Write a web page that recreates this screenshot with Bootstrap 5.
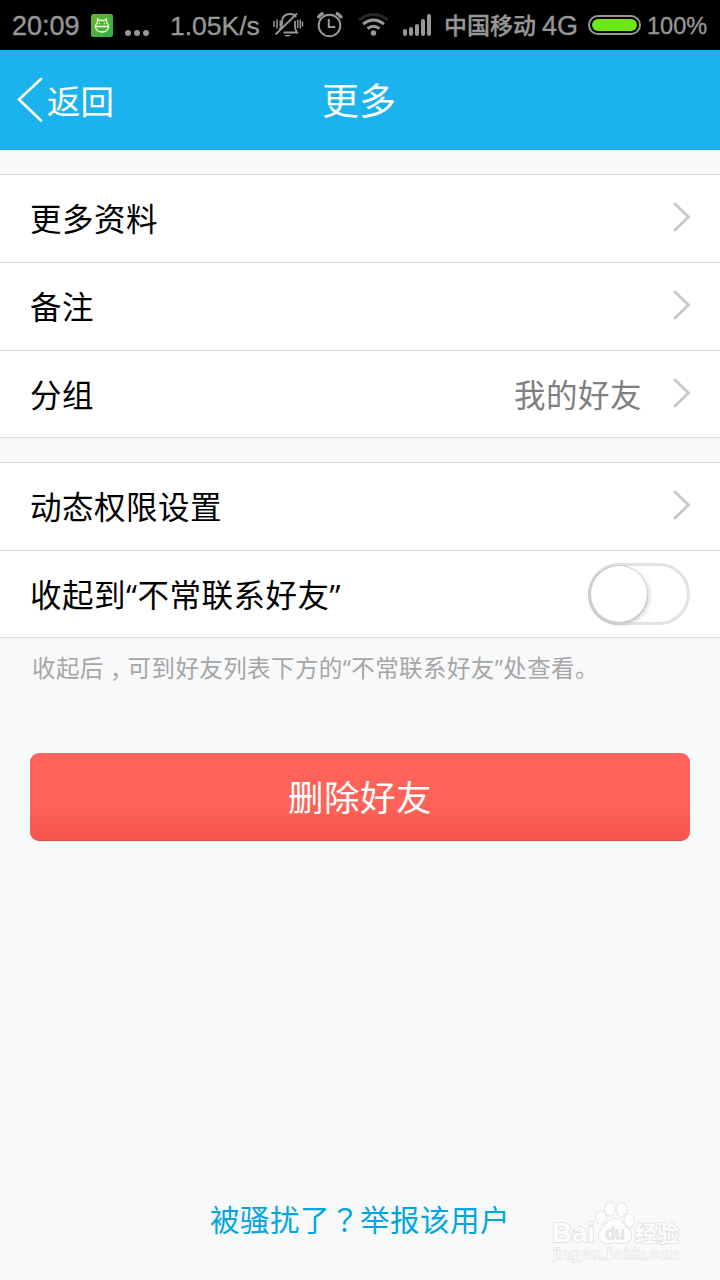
<!DOCTYPE html>
<html lang="zh-CN">
<head>
<meta charset="utf-8">
<meta name="viewport" content="width=device-width, initial-scale=1">
<title>更多</title>
<link href="https://cdn.jsdelivr.net/npm/bootstrap@5.3.0/dist/css/bootstrap.min.css" rel="stylesheet">
<style>
body{background:#f8f9fb;font-family:"Open Sans","Noto Sans CJK SC",sans-serif;color:#000;height:1280px;overflow:hidden}
svg{display:block;flex:none}
.status-bar{height:50px;background:#000;color:#979797;font:27px/50px "Liberation Sans","Noto Sans CJK SC",sans-serif;white-space:nowrap;padding-left:12px;-webkit-text-stroke:.35px #979797}
.status-bar>*{flex:none}
.status-bar .clock{width:79px;padding-top:2px}
.status-bar .dots{width:46px}
.status-bar .speed{width:103px;padding:2px 0 0 11px;font-size:26.5px}
.status-bar .carrier{width:98px;font:500 23px/46px "Noto Sans CJK SC",sans-serif;padding-bottom:2px}
.status-bar .net{width:46px;padding-top:2px}
.status-bar .charge{font-size:23.5px;padding:2px 0 0 6px}
.title-bar{height:100px;background:#1ab3ee;color:#fff;border-bottom:1px solid #18abe4}
.title-bar h1{font-size:37px;font-weight:400;line-height:96px;padding:3px 2px 0 0}
.back-link{width:120px;font-size:33.5px;padding-left:17px;color:#fff;text-decoration:none}
.back-link span{padding-top:3px}
.settings{border-top:1px solid #dcdddf;border-bottom:1px solid #dcdddf;margin-top:24px;border-radius:0}
.settings .list-group-item{height:88px;padding:0 30px 4px;border-color:#dcdddf;font-size:31.5px;letter-spacing:.5px;color:#000;background:#fff}
.settings .list-group-item:last-child{height:86px;padding-bottom:2px}
.settings .caption,.settings .picked{line-height:80px;padding-top:4px}
.settings .picked{color:#808080;margin-right:31px}
.switch{width:102px;height:62px;margin-top:2px;border:3px solid #e2e2e2;border-radius:31px;background:#fff}
.switch i{display:block;width:56px;height:56px;border-radius:50%;background:#fff;box-shadow:-1px 1px 0 2px #cdcdcd,2px 2px 5px #ccc}
.hint{font-size:23.5px;letter-spacing:.4px;line-height:36px;height:36px;color:#a6a6a6;margin:12px 32px 0}
.centered-mark{font-family:"Noto Sans CJK TC",sans-serif}
.hint .centered-mark{display:inline-block;line-height:24px;vertical-align:-8px}
.btn-remove{height:88px;margin:67px 30px 0;border:0;border-bottom:1px solid #dc5046;border-radius:9px;background:linear-gradient(#ff6359 0,#fe6258 60%,#f6554a 100%)!important;color:#fff!important;font-size:35.5px;letter-spacing:.5px;line-height:86px;padding:1px 0 0}
.report{color:#00a5e0;font-size:29.5px;letter-spacing:.5px;line-height:44px;text-decoration:none}
footer{padding-bottom:38px}
.watermark{right:34px;bottom:10px;width:140px;height:74px}
</style>
<script src="https://cdn.jsdelivr.net/npm/bootstrap@5.3.0/dist/js/bootstrap.bundle.min.js"></script>
</head>
<body class="d-flex flex-column position-relative">
<div class="status-bar d-flex align-items-center">
  <span class="clock">20:09</span>
  <svg width="22" height="23" viewBox="0 0 22 23"><defs><linearGradient id="g" x2="1" y2="1"><stop stop-color="#69b52f"/><stop offset="1" stop-color="#2fae47"/></linearGradient></defs><rect width="22" height="23" rx="2.500" fill="url(#g)"/><path d="M6.500 8.500V5l2.500 1.500h4L15.500 5v3.500M6.500 8.500Q4.500 10 4.500 12.500h13q0-2.500-2-4M4.500 12.500q.5 5.500 6.500 5.500t6.500-5.500M8 9.500h1.200M12.800 9.500H14" fill="none" stroke="#efffdc" stroke-width="1.300"/></svg>
  <svg class="dots" width="46" height="50" viewBox="0 0 46 50" fill="#979797"><circle cx="15" cy="33" r="3"/><circle cx="24" cy="33" r="3"/><circle cx="33" cy="33" r="3"/></svg>
  <span class="speed">1.05K/s</span>
  <svg width="182" height="50" viewBox="262 0 182 50" fill="none" stroke="#979797" stroke-width="1.800">
    <path d="M274 21v6M277 19.500v9M280.300 20.500v6M297.700 20v8M300.300 19.500v9M302.500 21.500v5" stroke-width="1.500"/>
    <path d="M279.500 29.500q2.500-2 2.500-6.500c0-7 3-9 8-9 3 0 5 1 6 3M295 21v5q0 4 2 6.500h-13.500M275.500 34.500L297 13.500"/><path d="M284 35h7q-3.500 3-7 0z" fill="#979797" stroke="none"/>
    <circle cx="329.500" cy="25.500" r="10.800" stroke-width="2"/><path d="M328.800 19v8h6.500" stroke-width="2"/><path d="M318 18q2-3.500 5.500-5M336 13q3.500 1.500 5.500 5" stroke-width="3.400"/>
    <g stroke-width="3"><path d="M359 20q14.500-11 29 0" stroke="#272727"/><path d="M363 24q10.500-8 21 0M367.500 28.500q6-4.500 12 0"/></g><circle cx="373.500" cy="33" r="2.700" fill="#979797" stroke="none"/>
    <g stroke-width="4" stroke-linecap="round"><path d="M405 34v-3M411 34v-5M417 34v-8M423 34V21M429 34V16"/></g>
  </svg>
  <span class="carrier">中国移动</span>
  <span class="net">4G</span>
  <svg width="53" height="22" viewBox="0 0 53 22"><rect x="1" y="2" width="51" height="18" rx="9" fill="none" stroke="#979797" stroke-width="2"/><rect x="4" y="5" width="45" height="12" rx="6" fill="#6de816"/></svg>
  <span class="charge">100%</span>
</div>
<header class="title-bar d-flex align-items-center">
  <a class="back-link d-flex align-items-center" href="#"><svg width="30" height="46" viewBox="0 0 30 46"><path d="M24 2L2 22.500 24 43.500" fill="none" stroke="#fff" stroke-width="2.600" stroke-linecap="round"/></svg><span class="text-nowrap">返回</span></a>
  <h1 class="flex-fill text-center mb-0">更多</h1>
  <div class="back-link"></div>
</header>
<main class="d-flex flex-column flex-fill">
  <div class="settings list-group list-group-flush">
    <a class="list-group-item d-flex align-items-center" href="#"><span class="caption me-auto">更多资料</span><svg width="17" height="30" viewBox="0 0 17 30"><path d="M2 2l13.500 13L2 28" fill="none" stroke="#c8c8c8" stroke-width="2.800" stroke-linecap="round"/></svg></a>
    <a class="list-group-item d-flex align-items-center" href="#"><span class="caption me-auto">备注</span><svg width="17" height="30" viewBox="0 0 17 30"><path d="M2 2l13.500 13L2 28" fill="none" stroke="#c8c8c8" stroke-width="2.800" stroke-linecap="round"/></svg></a>
    <a class="list-group-item d-flex align-items-center" href="#"><span class="caption me-auto">分组</span><span class="picked">我的好友</span><svg width="17" height="30" viewBox="0 0 17 30"><path d="M2 2l13.500 13L2 28" fill="none" stroke="#c8c8c8" stroke-width="2.800" stroke-linecap="round"/></svg></a>
  </div>
  <div class="settings list-group list-group-flush">
    <a class="list-group-item d-flex align-items-center" href="#"><span class="caption me-auto">动态权限设置</span><svg width="17" height="30" viewBox="0 0 17 30"><path d="M2 2l13.500 13L2 28" fill="none" stroke="#c8c8c8" stroke-width="2.800" stroke-linecap="round"/></svg></a>
    <div class="list-group-item d-flex align-items-center"><span class="caption me-auto">收起到“不常联系好友”</span><span class="switch" role="switch" aria-checked="false"><i></i></span></div>
  </div>
  <p class="hint">收起后<span class="centered-mark" lang="zh-TW">，</span>可到好友列表下方的“不常联系好友”处查看。</p>
  <button class="btn btn-danger btn-remove" type="button">删除好友</button>
  <footer class="mt-auto text-center"><a class="report" href="#">被骚扰了<span class="centered-mark" lang="zh-TW">？</span>举报该用户</a></footer>
</main>
<svg class="watermark position-absolute" viewBox="0 0 140 74" fill="#fdfdfe" stroke="#dfe0e1" stroke-width="1.600" paint-order="stroke">
  <text x="6" y="46" font-size="28" font-family="Liberation Sans,sans-serif" font-weight="700" textLength="43" lengthAdjust="spacingAndGlyphs">Bai</text>
  <ellipse cx="55" cy="21.500" rx="5" ry="6.300"/><ellipse cx="64" cy="13" rx="5" ry="6.800"/><ellipse cx="75.500" cy="13.500" rx="5" ry="6.800"/><ellipse cx="83" cy="24.500" rx="4.800" ry="6.300"/>
  <path d="M69 23c6 0 8 5 12.500 9 7 7 3.500 15-5 15-3 0-5-.5-7.500-.5s-4.500.5-7.500.5c-8.500 0-12-8-5-15C61 28 63 23 69 23z"/>
  <text x="69" y="43" font-size="17" text-anchor="middle" font-family="Liberation Sans,sans-serif" fill="#e9eaeb" stroke="#d6d7d9" stroke-width="1">du</text>
  <text x="89" y="45" font-size="22" font-family="Noto Sans CJK SC,sans-serif" font-weight="700">经验</text>
  <text x="7" y="63" font-size="15" textLength="126" lengthAdjust="spacingAndGlyphs" font-family="Liberation Sans,sans-serif" stroke="#e2e3e4" stroke-width="1.300">jingyan.baidu.com</text>
</svg>
</body>
</html>
